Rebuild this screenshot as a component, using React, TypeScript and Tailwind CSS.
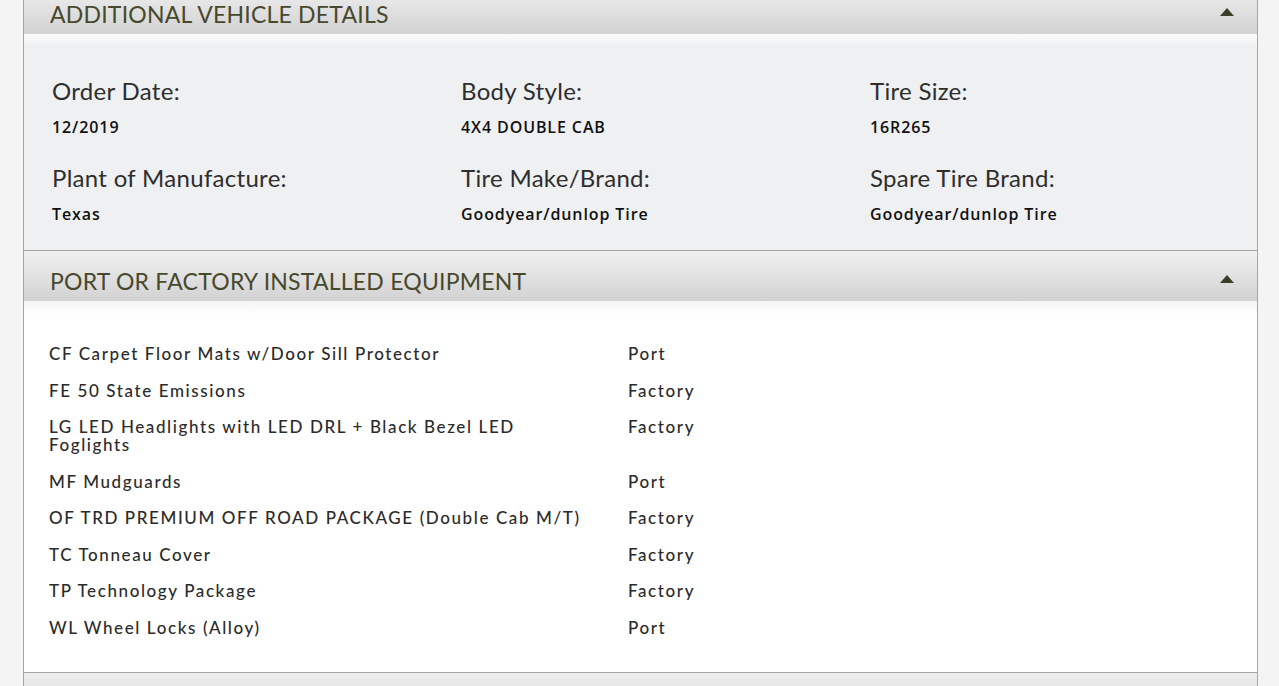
import React from "react";

const details: [string, string][][] = [
  [
    ["Order Date:", "12/2019"],
    ["Body Style:", "4X4 DOUBLE CAB"],
    ["Tire Size:", "16R265"],
  ],
  [
    ["Plant of Manufacture:", "Texas"],
    ["Tire Make/Brand:", "Goodyear/dunlop Tire"],
    ["Spare Tire Brand:", "Goodyear/dunlop Tire"],
  ],
];

const equipment: [string, string][] = [
  ["CF Carpet Floor Mats w/Door Sill Protector", "Port"],
  ["FE 50 State Emissions", "Factory"],
  ["LG LED Headlights with LED DRL + Black Bezel LED Foglights", "Factory"],
  ["MF Mudguards", "Port"],
  ["OF TRD PREMIUM OFF ROAD PACKAGE (Double Cab M/T)", "Factory"],
  ["TC Tonneau Cover", "Factory"],
  ["TP Technology Package", "Factory"],
  ["WL Wheel Locks (Alloy)", "Port"],
];

function Caret() {
  return (
    <svg width="14" height="8" viewBox="0 0 14 8" className="shrink-0">
      <polygon points="7,0 14,8 0,8" fill="#3d3d25" />
    </svg>
  );
}

function Header({ title, className = "" }: { title: string; className?: string }) {
  return (
    <div
      className={`h-[50px] flex items-start justify-between pl-[26px] pr-[23px] bg-gradient-to-b from-[#f1f1f1] to-[#d2d2d2] ${className}`}
    >
      <span className="pt-[16px] text-[23px] leading-[28px] text-[#48482d] tracking-[0.22px]">{title}</span>
      <span className="pt-[24px]">
        <Caret />
      </span>
    </div>
  );
}

export default function App() {
  return (
    <div
      className="w-[1279px] h-[686px] overflow-hidden bg-[#f4f4f4]"
      style={{ fontFamily: "Lato, 'Open Sans', sans-serif" }}
    >
      <div className="ml-[23px] w-[1235px] border-x border-[#a6a6a6]">
        <Header title="ADDITIONAL VEHICLE DETAILS" className="mt-[-16px]" />
        <div className="bg-[#eff0f2]">
          <div className="h-[14px] bg-gradient-to-b from-[#fafafa] to-[#eff0f2]" />
          <div className="pl-[28px] pt-[28px] pb-[26px] flex flex-col gap-[26px]">
            {details.map((row, i) => (
              <div key={i} className="grid grid-cols-[409px_409px_1fr]">
                {row.map(([label, value]) => (
                  <div key={label} className="flex flex-col gap-[11px]">
                    <div className="text-[24px] leading-[30px] text-[#2e2e2e] font-normal tracking-[0.3px]">{label}</div>
                    <div
                      className="text-[16px] leading-[20px] text-[#111] font-semibold tracking-[0.9px]"
                      style={{ fontFamily: "'Open Sans', sans-serif" }}
                    >
                      {value}
                    </div>
                  </div>
                ))}
              </div>
            ))}
          </div>
        </div>
        <div className="border-t border-[#a6a6a6]">
          <Header title="PORT OR FACTORY INSTALLED EQUIPMENT" />
        </div>
        <div className="bg-white">
          <div className="h-[14px] bg-gradient-to-b from-[#f5f5f5] to-white" />
          <div className="pl-[25px] pt-[30px] pb-[35px] flex flex-col gap-[18.5px]">
            {equipment.map(([name, src]) => (
              <div key={name} className="grid grid-cols-[579px_1fr] text-[17px] leading-[18px] tracking-[1.6px] text-[#2b2b2b] font-medium">
                <div className="max-w-[545px]">{name}</div>
                <div>{src}</div>
              </div>
            ))}
          </div>
        </div>
        <div className="border-t border-[#a6a6a6] h-[40px] bg-gradient-to-b from-[#efefef] to-[#d2d2d2]" />
      </div>
    </div>
  );
}
